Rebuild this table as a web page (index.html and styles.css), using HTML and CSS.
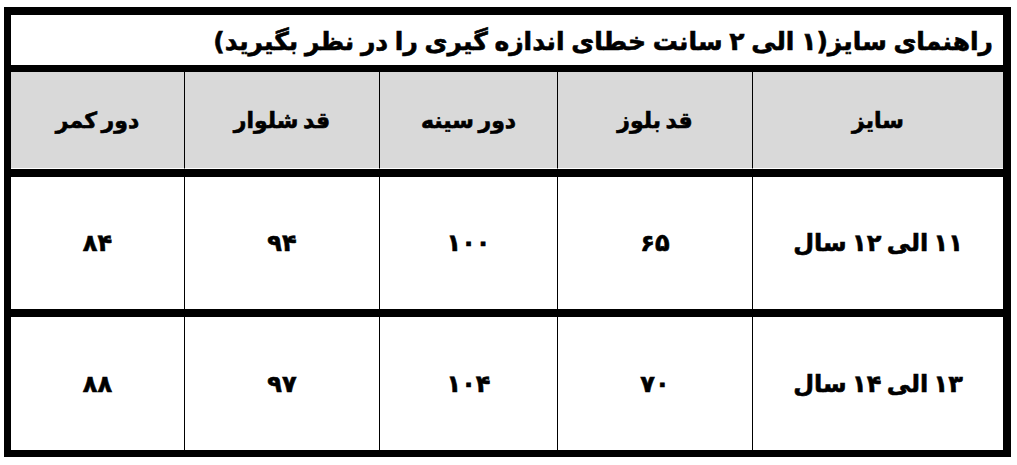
FILE: index.html
```html
<!DOCTYPE html>
<html lang="fa" dir="rtl">
<head>
<meta charset="utf-8">
<link rel="stylesheet" href="styles.css">
</head>
<body>
<div class="page">
<table class="size-table">
  <colgroup>
    <col class="c1"><col class="c2"><col class="c3"><col class="c4"><col class="c5">
  </colgroup>
  <tr class="title-row">
    <td colspan="5" class="title">راهنمای سایز(۱ الی ۲ سانت خطای اندازه گیری را در نظر بگیرید)</td>
  </tr>
  <tr class="head-row">
    <th>سایز</th>
    <th>قد بلوز</th>
    <th>دور سینه</th>
    <th>قد شلوار</th>
    <th>دور کمر</th>
  </tr>
  <tr class="data-row r1">
    <td>۱۱ الی ۱۲ سال</td>
    <td>۶۵</td>
    <td>۱۰۰</td>
    <td>۹۴</td>
    <td>۸۴</td>
  </tr>
  <tr class="data-row r2">
    <td>۱۳ الی ۱۴ سال</td>
    <td>۷۰</td>
    <td>۱۰۴</td>
    <td>۹۷</td>
    <td>۸۸</td>
  </tr>
</table>
</div>
</body>
</html>
```
FILE: styles.css
```css
html, body {
  margin: 0;
  padding: 0;
  background: #fff;
}
.page {
  padding: 7px 6px 0 4px;
  direction: ltr;
}
.size-table {
  direction: rtl;
  width: 1007px;
  border-collapse: separate;
  border-spacing: 0;
  border-style: solid;
  border-color: #000;
  border-width: 8px 8px 7px 7px;
  table-layout: fixed;
  font-family: "DejaVu Sans", "Noto Sans", sans-serif;
  font-weight: bold;
  color: #000;
  -webkit-text-stroke: 0.6px #000;
}
.c1 { width: 251px; }
.c2 { width: 195px; }
.c3 { width: 178px; }
.c4 { width: 195px; }
.c5 { width: 173px; }
.size-table td, .size-table th {
  padding: 0;
  text-align: center;
  vertical-align: middle;
  border-left: 1px solid #000;
}
.size-table tr > :last-child {
  border-left: none;
}
.title-row .title {
  height: 48px;
  text-align: right;
  padding-right: 10px;
  padding-top: 2px;
  font-size: 25px;
  word-spacing: -2px;
  border-left: none;
}
.head-row th {
  height: 96px;
  background: #d9d9d9;
  border-top: 7px solid #000;
  border-bottom: 1px solid #fff;
  font-size: 22px;
  word-spacing: -3px;
}
.data-row td {
  border-top: 8px solid #000;
  font-size: 24px;
  word-spacing: -3px;
}
.r1 td { height: 132px; }
.r2 td { height: 133px; }
```
